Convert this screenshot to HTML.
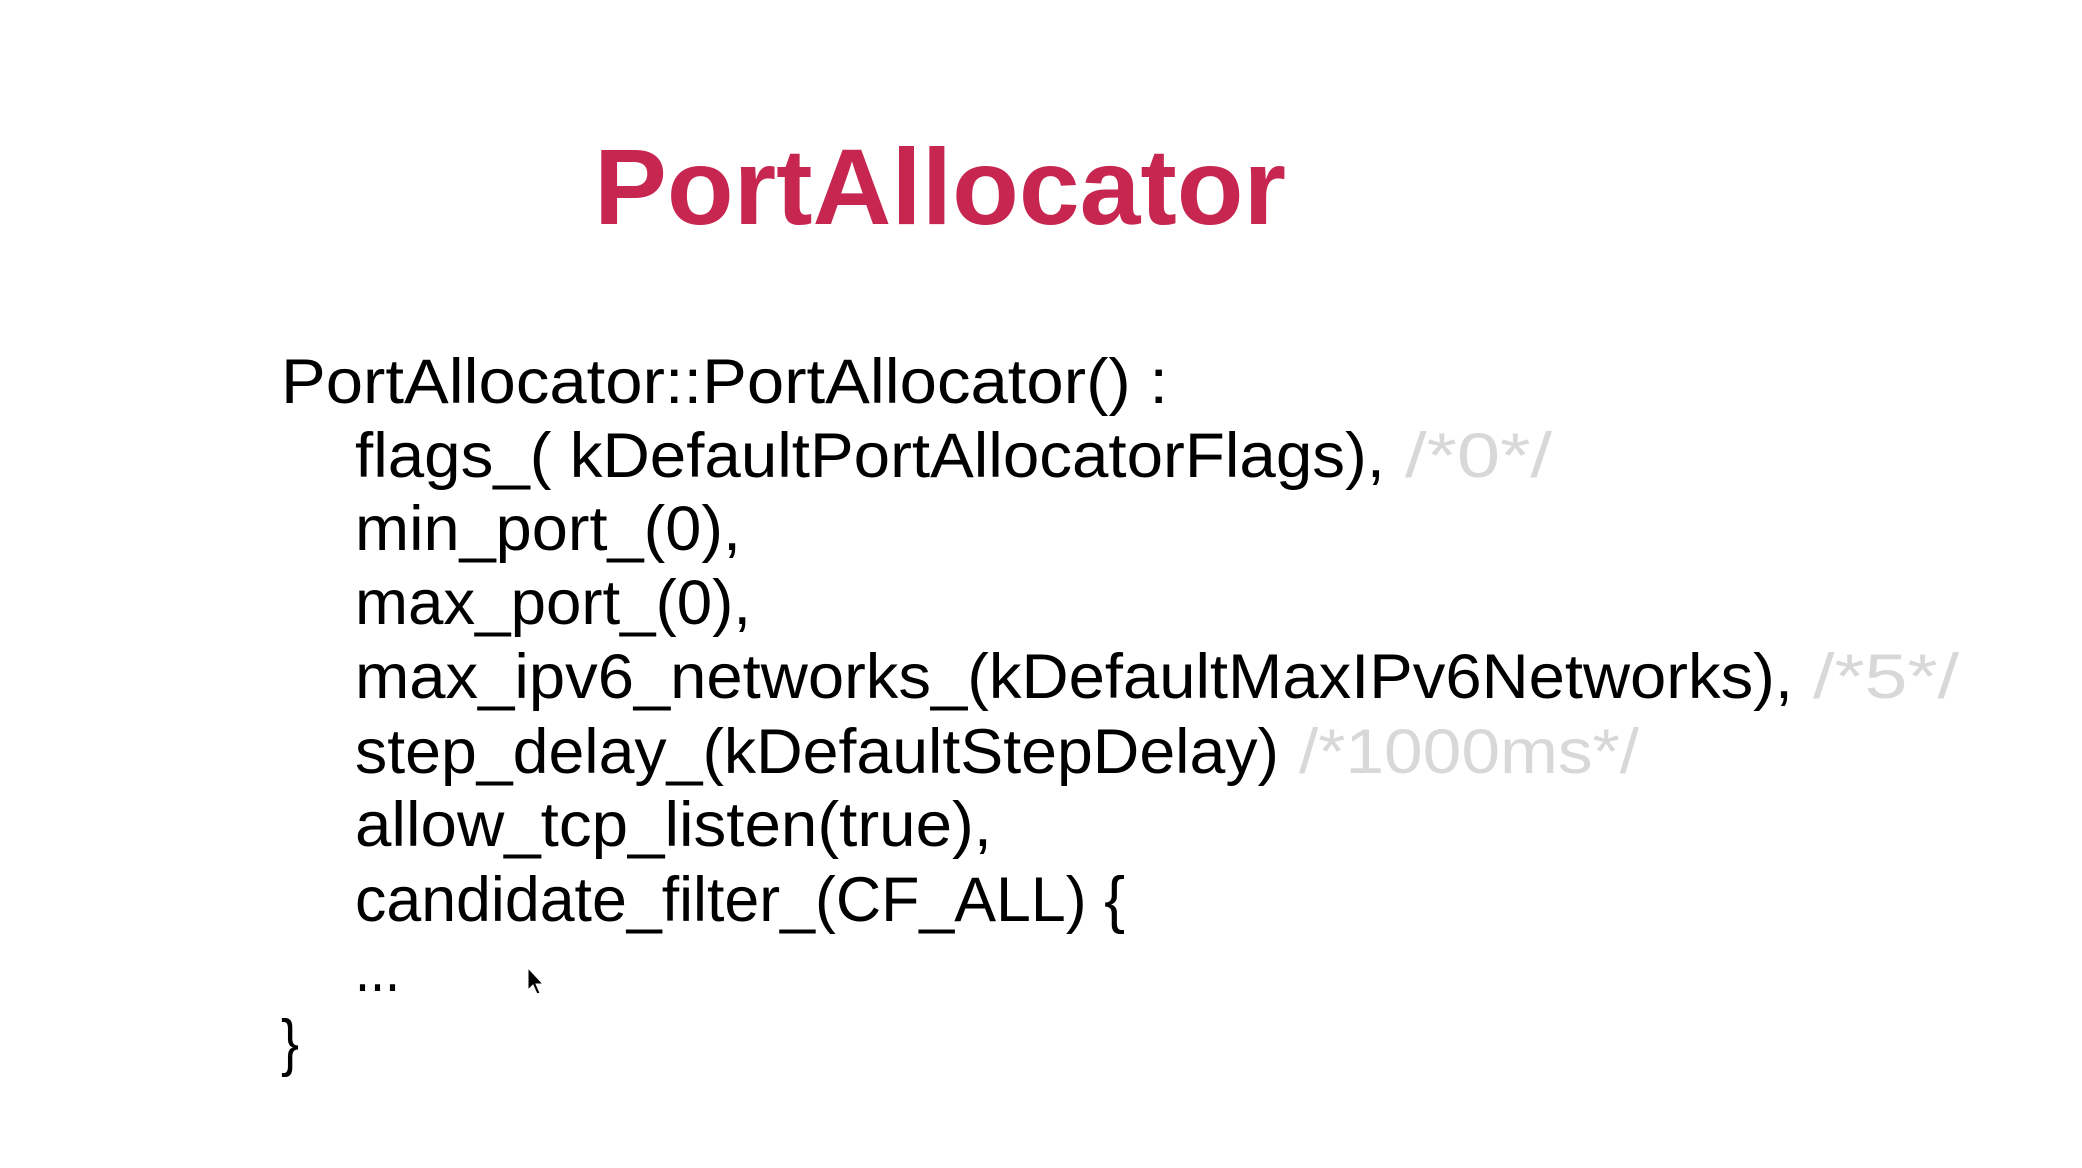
<!DOCTYPE html>
<html><head><meta charset="utf-8"><style>
html,body{margin:0;padding:0;background:#fff;width:2082px;height:1168px;overflow:hidden}
svg{display:block}
text{font-family:"Liberation Sans",sans-serif}
.c{fill:#000;font-size:63px}
.g{fill:#d8d8d8;font-size:63px}
</style></head><body>
<svg width="2082" height="1168" viewBox="0 0 2082 1168">
<g transform="translate(-3,-4)">
<text x="597" y="228" fill="#c6264f" font-size="108" font-weight="bold" textLength="692" lengthAdjust="spacingAndGlyphs">PortAllocator</text>
<text class="c" x="284" y="407" textLength="887" lengthAdjust="spacingAndGlyphs">PortAllocator::PortAllocator() :</text>
<text class="c" x="358" y="481" textLength="1030" lengthAdjust="spacingAndGlyphs">flags_( kDefaultPortAllocatorFlags),</text>
<text class="g" x="1408" y="481" textLength="147" lengthAdjust="spacingAndGlyphs">/*0*/</text>
<text class="c" x="358" y="554" textLength="386" lengthAdjust="spacingAndGlyphs">min_port_(0),</text>
<text class="c" x="358" y="628" textLength="396" lengthAdjust="spacingAndGlyphs">max_port_(0),</text>
<text class="c" x="358" y="702" textLength="1438" lengthAdjust="spacingAndGlyphs">max_ipv6_networks_(kDefaultMaxIPv6Networks),</text>
<text class="g" x="1816" y="702" textLength="146" lengthAdjust="spacingAndGlyphs">/*5*/</text>
<text class="c" x="358" y="777" textLength="924" lengthAdjust="spacingAndGlyphs">step_delay_(kDefaultStepDelay)</text>
<text class="g" x="1302" y="777" textLength="340" lengthAdjust="spacingAndGlyphs">/*1000ms*/</text>
<text class="c" x="358" y="850" textLength="637" lengthAdjust="spacingAndGlyphs">allow_tcp_listen(true),</text>
<text class="c" x="358" y="925" textLength="770" lengthAdjust="spacingAndGlyphs">candidate_filter_(CF_ALL) {</text>
<text class="c" x="358" y="995" textLength="45" lengthAdjust="spacingAndGlyphs">...</text>
<text class="c" x="284" y="1068" textLength="18" lengthAdjust="spacingAndGlyphs">}</text>
</g>
<path d="M528 968 L528 990 L533 985 L537 994 L540 993 L536 984 L543 984 Z" fill="#000" stroke="#fff" stroke-width="1"/>
</svg>
</body></html>
